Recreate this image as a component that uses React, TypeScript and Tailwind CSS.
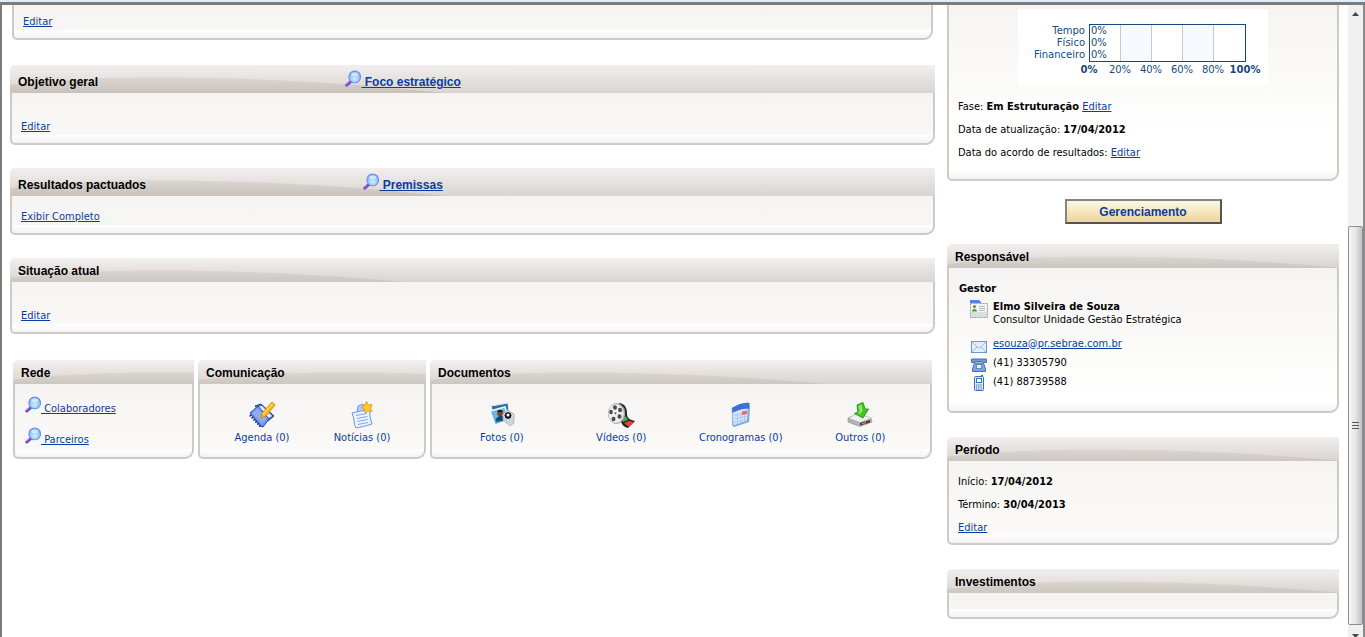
import type { ReactNode } from "react";

const BODY_BG =
  "bg-[linear-gradient(#ffffff,#f5f2f2),linear-gradient(#f5f4f2,#ffffff)] bg-[length:100%_8px,100%_130px] bg-[position:bottom,top] bg-no-repeat";
const LINK = "text-[#0a3d9e] underline";

function Swoosh() {
  return (
    <svg className="absolute left-0 top-0 h-7 w-[440px]" viewBox="0 0 440 28" aria-hidden="true">
      <defs>
        <linearGradient id="swoosh" gradientUnits="userSpaceOnUse" x1="0" x2="0" y1="10" y2="28">
          <stop offset="0" stopColor="#d6d1cd" stopOpacity="0.6" />
          <stop offset="1" stopColor="#c9c2bb" />
        </linearGradient>
      </defs>
      <path d="M0 20C50 14 100 12.500 150 12.500C250 12.500 340 18 436 28H0Z" fill="url(#swoosh)" />
    </svg>
  );
}

function PanelBody({ className = "", children }: { className?: string; children?: ReactNode }) {
  return (
    <div
      className={`grow rounded-bl-[5px] rounded-br-[9px] border-2 border-t-0 border-[#d0cac6] ${BODY_BG} ${className}`}
    >
      {children}
    </div>
  );
}

function Panel({
  title,
  link,
  tall = false,
  className = "",
  children,
}: {
  title: string;
  link?: string;
  tall?: boolean;
  className?: string;
  children?: ReactNode;
}) {
  return (
    <section className="flex flex-col">
      <header
        className={`relative overflow-hidden rounded-tl-[5px] bg-linear-to-b from-[#f2efee] to-[#d9d4d1] font-['Liberation_Sans',Arial,sans-serif] text-xs font-bold ${tall ? "h-7 pt-1.5" : "h-6 pt-0.5"}`}
      >
        <Swoosh />
        <div className="relative flex h-full items-center">
          <h2 className={`pl-2 whitespace-nowrap ${tall ? "w-[30%]" : ""}`}>{title}</h2>
          {link && (
            <div className="flex w-1/4 justify-center">
              <SearchLink label={link} />
            </div>
          )}
        </div>
      </header>
      <PanelBody className={className}>{children}</PanelBody>
    </section>
  );
}

function SearchLink({ label }: { label: string }) {
  return (
    <a href="#" className="flex h-4 items-end text-[#0a3d9e]">
      <svg className="mb-[3px] h-[17px] w-4 shrink-0" viewBox="0 0 17 18" aria-hidden="true">
        <defs>
          <radialGradient id="lens" cx="0.5" cy="0.65" r="0.6">
            <stop offset="0" stopColor="#c9f1ff" />
            <stop offset="0.6" stopColor="#9ccbfb" />
            <stop offset="1" stopColor="#79a6f3" />
          </radialGradient>
        </defs>
        <path d="M1.800 16L6 12.300" stroke="#6f3fd6" strokeWidth="3" strokeLinecap="round" />
        <path d="M1.800 15.200L4.300 12.900" stroke="#b68cf0" strokeWidth="1" strokeLinecap="round" />
        <circle cx="10.300" cy="7.300" r="6.200" fill="url(#lens)" stroke="#6a93ea" strokeWidth="1.200" />
        <ellipse cx="10.300" cy="4.400" rx="3.800" ry="2" fill="#fff" opacity="0.55" />
      </svg>
      <span className="whitespace-pre underline">{" " + label}</span>
    </a>
  );
}

function AgendaIcon() {
  return (
    <svg className="h-7 w-7" viewBox="0 0 28 28" aria-hidden="true">
      <path d="M7 5L13 3L26 15L20 20Z" fill="#4a6fc4" stroke="#26408f" />
      <path d="M9 6L14 5L24 15L19 18Z" fill="#dfe9ff" />
      <path d="M2 12L10 5L21 18L15 26L12 25Z" fill="#6f93e2" stroke="#2c4ba5" />
      <path d="M4 12L10 7L19 18L14 23Z" fill="#8aabf0" />
      <path d="M2 14L13 26" stroke="#223a86" strokeWidth="2.500" strokeDasharray="1.500 1.300" />
      <path d="M24 1L27 4L18 15L13 17L14 12Z" fill="#ffb414" stroke="#d98300" strokeWidth="0.800" />
      <path d="M24.500 3L15 13" stroke="#ffe05a" strokeWidth="1.200" />
    </svg>
  );
}

function NewsIcon() {
  return (
    <svg className="h-7 w-7" viewBox="0 0 28 28" aria-hidden="true">
      <path d="M9 12L10 5L15 3L18 8L17 13Z" fill="#b9cff8" stroke="#7195dd" />
      <path d="M4 12C9 11 16 9 22 9C21 15 23 19 24 23C18 25 13 26 8 27C5 23 7 18 4 12Z" fill="#eaf3ff" stroke="#6d92dc" />
      <path d="M8 14.500L19 12.500M9 17.500L19.500 15.500M9.500 20.500L20 18.500M10 23.500L20 21.500" stroke="#86a8ea" strokeWidth="1.200" />
      <path d="M18.500 0.500L20.200 4L24 3.800L22.300 7.200L24 10.500L20 9.800L17 12L16.700 8.200L13 6.500L16.700 4.800Z" fill="#ffd31f" stroke="#ee8c10" strokeWidth="0.900" />
    </svg>
  );
}

function PhotosIcon() {
  return (
    <svg className="h-7 w-7" viewBox="0 0 28 28" aria-hidden="true">
      <path d="M3 5L20 2L21 11L5 12Z" fill="#2e6f9e" stroke="#e4edf3" />
      <path d="M2 10L17 6L21 19L7 24Z" fill="#68b6e6" stroke="#f4f8fb" strokeWidth="1.600" />
      <path d="M7 18L18 15L19 19L8 22Z" fill="#2f86c0" />
      <path d="M8 20C8 16 11 15 13 15C16 15 17 17 17 19Z" fill="#174668" />
      <circle cx="12" cy="12.500" r="2.800" fill="#71452b" />
      <path d="M9 11C10 8 14 8 15 11Z" fill="#26180f" />
      <path d="M15 13L20 9L26 13L26 22L22 25L15 19Z" fill="#d3d5da" stroke="#a5a8b0" strokeWidth="0.700" />
      <circle cx="20" cy="14.500" r="4" fill="#15171c" stroke="#eef0f4" />
      <circle cx="20" cy="14" r="1.500" fill="#fff" />
    </svg>
  );
}

function VideosIcon() {
  return (
    <svg className="h-7 w-7" viewBox="0 0 28 28" aria-hidden="true">
      <path d="M12 2C19 3 20 8 20 13C20 17 23 19 28 20L21 27C16 26 14 22 13 18Z" fill="#252525" />
      <path d="M14 5L17.500 7L18 11L14 10Z" fill="#3d8de4" />
      <path d="M14 11L18 12L18 15L14 15Z" fill="#f5c52d" />
      <path d="M14.500 16L19 15.500L21 19L16 21Z" fill="#45ad58" />
      <path d="M17 22L22 20L27 21L22 26Z" fill="#e8452f" />
      <ellipse cx="9.500" cy="12.500" rx="8" ry="10" fill="#d9d9d9" stroke="#a5a5a5" />
      <ellipse cx="8.500" cy="12.500" rx="7" ry="9" fill="#efefef" />
      <g fill="#4b4b4b">
        <ellipse cx="8" cy="6.500" rx="2" ry="2.200" />
        <ellipse cx="13" cy="9" rx="2" ry="2.200" />
        <ellipse cx="4" cy="11" rx="1.800" ry="2.200" />
        <ellipse cx="12.500" cy="15.500" rx="2" ry="2.200" />
        <ellipse cx="6.500" cy="18" rx="2" ry="2.200" />
        <circle cx="8.500" cy="12.300" r="1" />
      </g>
    </svg>
  );
}

function ScheduleIcon() {
  return (
    <svg className="h-7 w-7" viewBox="0 0 28 28" aria-hidden="true">
      <path d="M6 7L21 2L23 5L22 21L7 26L5 24Z" fill="#7c9fdf" />
      <path d="M5 7L21.500 3L20.500 20L6 25Z" fill="#d5e4fa" stroke="#7fa4e6" strokeWidth="0.800" />
      <path d="M5 7C10 4 16 1 22.500 2L22 8C17 7 11 9 5.500 12Z" fill="#3f70d6" />
      <path d="M7 14.500L20.500 11.500M7 18L20.500 15M7 21.500L20 18.500M10.500 12.500V23M14 11.500V22M17.500 10.500V21" stroke="#a5c0ee" strokeWidth="0.800" />
      <path d="M15 10.500L20 9.500V13L15 14Z" fill="#ee6a66" />
    </svg>
  );
}

function DownloadIcon() {
  return (
    <svg className="h-7 w-7" viewBox="0 0 28 28" aria-hidden="true">
      <path d="M2 17L11 13L25 17L26 21L14 25.500L2 21Z" fill="#b2b3b9" stroke="#8d8f98" strokeWidth="0.700" />
      <path d="M3 17L11 13L25 17L14 21Z" fill="#f0f0f4" />
      <path d="M14 22L24 19V21.500L14 24.500Z" fill="#4c3a22" />
      <path d="M16 22.300L20 21V22L16 23.300Z" fill="#f0a63b" />
      <path d="M11 4L17 1.500L19 8L22.500 8L17 17L8.500 12.500L12 11Z" fill="#43c527" stroke="#249310" strokeWidth="0.900" />
      <path d="M12.500 5L15.500 3.500L16.500 10L14 13L11.500 12L13.500 11Z" fill="#8bea68" />
    </svg>
  );
}

function Shortcut({ icon, label }: { icon: ReactNode; label: string }) {
  return (
    <a href="#" className="flex flex-col items-center gap-0.5 text-[#0a3d9e]">
      {icon}
      <span className="whitespace-nowrap">{label}</span>
    </a>
  );
}

function ProgressChart() {
  return (
    <svg
      className="mx-auto block h-[76px] w-[250px] bg-white font-['DejaVu_Sans',Verdana,sans-serif] text-[10px]"
      viewBox="0 0 250 76"
      fill="#174a7c"
      role="img"
      aria-label="Tempo 0%, Físico 0%, Financeiro 0%"
    >
      <rect x="103" y="16" width="31" height="36" fill="#f6f9fe" />
      <rect x="165" y="16" width="31" height="36" fill="#f6f9fe" />
      <path d="M102.500 16V52M133.500 16V52M164.500 16V52M195.500 16V52" stroke="#c8c8c8" />
      <rect x="71.500" y="15.500" width="156" height="37" fill="none" stroke="#174a7c" />
      <g textAnchor="end">
        <text x="67" y="25">Tempo</text>
        <text x="67" y="37">Físico</text>
        <text x="67" y="49">Financeiro</text>
      </g>
      <text x="73" y="25">0%</text>
      <text x="73" y="37">0%</text>
      <text x="73" y="49">0%</text>
      <g textAnchor="middle">
        <text x="71" y="64" fontWeight="bold">0%</text>
        <text x="102" y="64">20%</text>
        <text x="133" y="64">40%</text>
        <text x="164" y="64">60%</text>
        <text x="195" y="64">80%</text>
        <text x="227" y="64" fontWeight="bold">100%</text>
      </g>
    </svg>
  );
}

function CardIcon() {
  return (
    <svg className="h-[18px] w-5" viewBox="0 0 20 18" aria-hidden="true">
      <rect x="1.500" y="3.500" width="17" height="14" fill="#dcdede" stroke="#9c9f9f" strokeDasharray="2 1" />
      <path d="M1 0H10L12 2V3H1Z" fill="#4f83ee" />
      <rect x="2" y="4" width="16" height="8" fill="#f3f5f4" />
      <circle cx="5.500" cy="6.500" r="1.500" fill="#a0663c" />
      <path d="M3 11.500C3 8 8 8 8 11.500Z" fill="#35a02c" />
      <path d="M10 6.500H16M10 8.500H16M10 10.500H16" stroke="#b6bcc4" />
    </svg>
  );
}

function MailIcon() {
  return (
    <svg className="h-3 w-4" viewBox="0 0 16 12" aria-hidden="true">
      <rect x="0.500" y="0.500" width="15" height="11" fill="#e4effc" stroke="#6d99d2" />
      <path d="M1 1L8 7.500L15 1M1 11L6 6M15 11L10 6" fill="none" stroke="#92b4e2" />
    </svg>
  );
}

function PhoneIcon() {
  return (
    <svg className="h-3.5 w-4" viewBox="0 0 16 14" aria-hidden="true">
      <path d="M0.500 1H15.500V4.500H12L11.500 3.500H4.500L4 4.500H0.500Z" fill="#6f9bd0" stroke="#4674b0" />
      <path d="M3.500 5H12.500L14.500 11V13.500H1.500V11Z" fill="#7ea6d8" stroke="#4674b0" />
      <rect x="5.500" y="6.500" width="5" height="4" fill="#e9f2fd" stroke="#5a88c4" />
    </svg>
  );
}

function MobileIcon() {
  return (
    <svg className="h-4 w-3" viewBox="0 0 12 16" aria-hidden="true">
      <path d="M9 0V2" stroke="#2c63ad" strokeWidth="2" />
      <rect x="1.500" y="1.500" width="9" height="14" rx="1" fill="#ddeafa" stroke="#3a70b8" />
      <rect x="3.500" y="3.500" width="5" height="4" fill="#fff" stroke="#3a70b8" />
      <path d="M3 10H9M3 12H9M3 14H9" stroke="#3a70b8" strokeDasharray="1.300 0.900" />
    </svg>
  );
}

function ContactRow({ icon, children }: { icon: ReactNode; children: ReactNode }) {
  return (
    <li className="flex h-[19px] items-center gap-1.5">
      <span className="flex h-[19px] w-4 items-end justify-center">{icon}</span>
      {children}
    </li>
  );
}

function Scrollbar() {
  return (
    <div className="flex w-[17px] shrink-0 flex-col items-center border-r-2 border-[#8a8a8a] bg-[#f0f0f0]" aria-hidden="true">
      <div className="flex h-[17px] items-center">
        <svg className="h-1 w-[7px]" viewBox="0 0 7 4">
          <path d="M3.500 0L7 4H0Z" fill="#444" />
        </svg>
      </div>
      <div className="flex-[205]" />
      <div className="flex w-[15px] flex-[398] flex-col items-center justify-center gap-0.5 rounded-xs border border-[#8f8f93] bg-linear-to-r from-[#f6f6f6] via-[#e6e6e8] to-[#bfc0c4]">
        <span className="h-px w-[7px] bg-[#55585c]" />
        <span className="h-px w-[7px] bg-[#55585c]" />
        <span className="h-px w-[7px] bg-[#55585c]" />
      </div>
      <div className="flex h-3 items-end overflow-hidden">
        <svg className="h-1 w-[7px]" viewBox="0 0 7 4">
          <path d="M0 1H7L3.500 5Z" fill="#444" />
        </svg>
      </div>
    </div>
  );
}

export default function App() {
  return (
    <div className="flex h-screen flex-col overflow-hidden bg-white font-['DejaVu_Sans_Condensed','DejaVu_Sans',Tahoma,sans-serif] text-[11px] leading-[14px] text-black">
      <div className="h-[5px] shrink-0 border-b-3 border-[#7c7c7c] bg-[#e2edfa]" />
      <div className="flex min-h-0 grow border-l-2 border-[#7c7c7c]">
        <main className="flex min-w-0 grow gap-3 overflow-hidden pr-[9px] pl-2">
          <div className="flex min-w-0 grow flex-col">
            <div className="mx-0.5 flex h-[35px] shrink-0">
              <PanelBody className="px-[9px] pt-2.5">
                <a href="#" className={`block w-fit ${LINK}`}>Editar</a>
              </PanelBody>
            </div>

            <div className="mt-[25px] flex flex-col gap-[23px]">
              <Panel title="Objetivo geral" link="Foco estratégico" tall className="px-[9px] pt-[27px] pb-[9px]">
                <a href="#" className={`block w-fit ${LINK}`}>Editar</a>
              </Panel>
              <Panel title="Resultados pactuados" link="Premissas" tall className="px-[9px] pt-3.5 pb-[9px]">
                <a href="#" className={`block w-fit ${LINK}`}>Exibir Completo</a>
              </Panel>
              <Panel title="Situação atual" className="px-[9px] pt-[27px] pb-[9px]">
                <a href="#" className={`block w-fit ${LINK}`}>Editar</a>
              </Panel>
            </div>

            <div className="mx-[3px] mt-[26px] grid grid-cols-[181fr_228fr_502fr] gap-1">
              <Panel title="Rede" className="flex flex-col gap-[15px] px-2.5 pt-4">
                <SearchLink label="Colaboradores" />
                <SearchLink label="Parceiros" />
              </Panel>
              <Panel title="Comunicação" className="grid grid-cols-2 px-3 pt-[17px] pb-3">
                <Shortcut icon={<AgendaIcon />} label="Agenda (0)" />
                <Shortcut icon={<NewsIcon />} label="Notícias (0)" />
              </Panel>
              <Panel title="Documentos" className="grid grid-cols-4 px-2.5 pt-[17px] pb-3">
                <Shortcut icon={<PhotosIcon />} label="Fotos (0)" />
                <Shortcut icon={<VideosIcon />} label="Vídeos (0)" />
                <Shortcut icon={<ScheduleIcon />} label="Cronogramas (0)" />
                <Shortcut icon={<DownloadIcon />} label="Outros (0)" />
              </Panel>
            </div>
          </div>

          <aside className="flex w-[392px] shrink-0 flex-col">
            <PanelBody className="grow-0 px-[9px] pt-1 pb-[15px]">
              <ProgressChart />
              <div className="pt-2.5 leading-[23px]">
                <p>Fase: <b>Em Estruturação</b> <a href="#" className={LINK}>Editar</a></p>
                <p>Data de atualização: <b>17/04/2012</b></p>
                <p>Data do acordo de resultados: <a href="#" className={LINK}>Editar</a></p>
              </div>
            </PanelBody>

            <button
              type="button"
              className="mx-auto mt-[18px] mb-5 h-[25px] w-[157px] border-2 border-t-[#85857f] border-r-[#55554f] border-b-[#55554f] border-l-[#85857f] bg-linear-to-b from-[#fdf8e6] to-[#ecd795] font-['Liberation_Sans',Arial,sans-serif] text-xs font-bold text-[#0a3d9e]"
            >
              Gerenciamento
            </button>

            <div className="flex flex-col gap-6">
              <Panel title="Responsável" className="px-2.5 pt-3.5 pb-5">
                <h3 className="font-bold">Gestor</h3>
                <div className="mt-1 flex gap-1 pl-2.5">
                  <CardIcon />
                  <p className="leading-[13px]">
                    <b className="block">Elmo Silveira de Souza</b>
                    Consultor Unidade Gestão Estratégica
                  </p>
                </div>
                <ul className="mt-2 pl-3">
                  <ContactRow icon={<MailIcon />}>
                    <a href="#" className={LINK}>esouza@pr.sebrae.com.br</a>
                  </ContactRow>
                  <ContactRow icon={<PhoneIcon />}>(41) 33305790</ContactRow>
                  <ContactRow icon={<MobileIcon />}>(41) 88739588</ContactRow>
                </ul>
              </Panel>

              <Panel title="Período" className="px-[9px] pt-[9px] pb-1 leading-[23px]">
                <p>Início: <b>17/04/2012</b></p>
                <p>Término: <b>30/04/2013</b></p>
                <a href="#" className={`block w-fit ${LINK}`}>Editar</a>
              </Panel>

              <Panel title="Investimentos" className="h-[26px]" />
            </div>
          </aside>
        </main>
        <Scrollbar />
      </div>
    </div>
  );
}
